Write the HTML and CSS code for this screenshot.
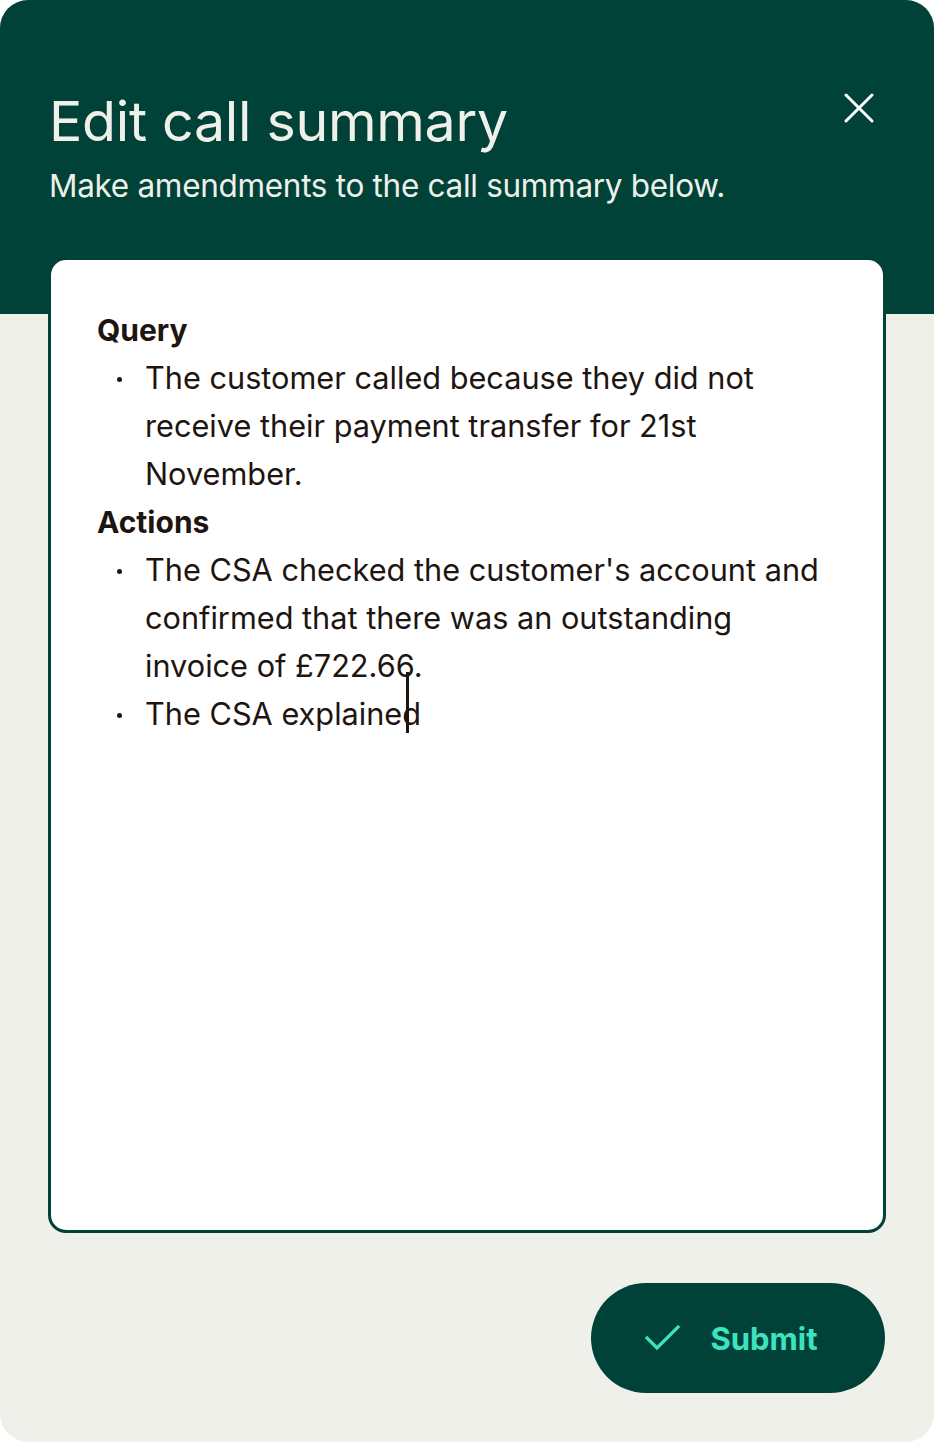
FILE: index.html
```html
<!DOCTYPE html>
<html lang="en">
<head>
<meta charset="utf-8">
<title>Edit call summary</title>
<link rel="stylesheet" href="styles.css">
</head>
<body>
<div class="panel">
  <header class="header">
    <div class="header-text">
      <h1 class="title">Edit call summary</h1>
      <p class="subtitle">Make amendments to the call summary below.</p>
    </div>
    <button class="close" aria-label="Close">
      <svg width="30" height="30" viewBox="0 0 30 30"><path d="M2 2 L28 28 M28 2 L2 28" stroke="#ffffff" stroke-width="3" stroke-linecap="round" fill="none"/></svg>
    </button>
  </header>
  <div class="editor">
    <h2 class="section">Query</h2>
    <ul class="list">
      <li>The customer called because they did not receive their payment transfer for 21st November.</li>
    </ul>
    <h2 class="section">Actions</h2>
    <ul class="list">
      <li>The CSA checked the customer's account and confirmed that there was an outstanding invoice of £722.66.</li>
      <li>The CSA explained</li>
    </ul>
    <span class="cursor"></span>
  </div>
  <div class="actions">
    <button class="submit">
      <svg width="38" height="30" viewBox="0 0 38 30"><path d="M3 15 L13 25 L34 4" stroke="#3de3c1" stroke-width="3.2" fill="none" stroke-linecap="square"/></svg>
      <span>Submit</span>
    </button>
  </div>
</div>
</body>
</html>
```
FILE: styles.css
```css
* { box-sizing: border-box; }
html, body { margin: 0; padding: 0; background: #ffffff; }
body { font-family: Inter, "Noto Sans", sans-serif; }
.panel {
  width: 934px;
  height: 1442px;
  background: #f0f0eb;
  border-radius: 28px;
  overflow: hidden;
  display: flex;
  flex-direction: column;
}
.header {
  background: #004237;
  height: 314px;
  padding: 88px 60px 0 49px;
  display: flex;
  justify-content: space-between;
  align-items: flex-start;
  flex-shrink: 0;
}
.title {
  margin: 0;
  color: #f0f0eb;
  font-size: 55.5px;
  font-weight: 400;
  line-height: 66px;
  letter-spacing: -0.3px;
}
.subtitle {
  margin: 13px 0 0;
  color: #f0f0eb;
  font-size: 31.5px;
  line-height: 38px;
  font-weight: 400;
  letter-spacing: -0.3px;
}
.close {
  background: none;
  border: 0;
  padding: 0;
  margin-top: 5px;
  width: 30px;
  height: 30px;
  cursor: pointer;
}
.editor {
  position: relative;
  margin: -57px 48px 0 48px;
  height: 976px;
  background: #ffffff;
  border: 3px solid #004237;
  border-radius: 18px;
  padding: 46px 46px 0 46px;
  color: #1e1510;
  font-size: 30.7px;
  line-height: 48px;
  flex-shrink: 0;
}
.section {
  margin: 0;
  font-size: 30px;
  line-height: 48px;
  font-weight: 700;
}
.list {
  margin: 0;
  padding-left: 48px;
  list-style: none;
}
.list li { position: relative; }
.list li::before {
  content: "";
  position: absolute;
  left: -28px;
  top: 23px;
  width: 5px;
  height: 5px;
  border-radius: 50%;
  background: #1e1510;
}
.cursor {
  position: absolute;
  left: 355px;
  top: 412px;
  width: 3px;
  height: 61px;
  background: #1e1510;
}
.actions {
  display: flex;
  justify-content: flex-end;
  padding: 50px 49px 0 0;
}
.submit {
  width: 294px;
  height: 110px;
  border-radius: 55px;
  background: #004237;
  border: 0;
  display: flex;
  align-items: center;
  justify-content: center;
  gap: 28px;
  color: #3de3c1;
  font-family: Inter, "Noto Sans", sans-serif;
  font-size: 31px;
  font-weight: 700;
  padding: 0 14px 0 0;
  cursor: pointer;
}
```
